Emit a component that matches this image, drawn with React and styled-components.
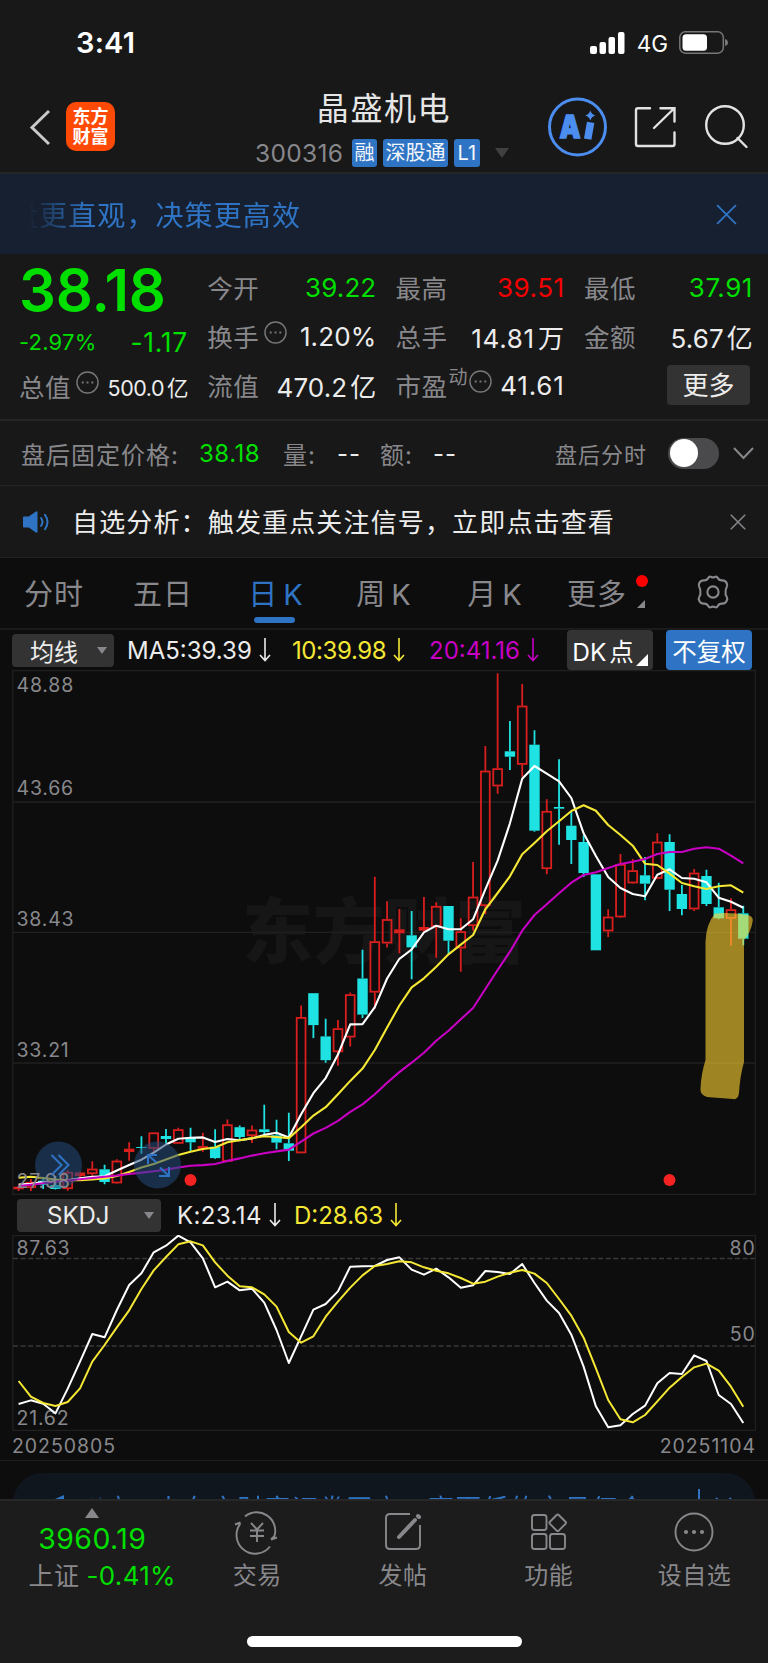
import React, { useState } from "react";
import styled, { createGlobalStyle } from "styled-components";

const blue = "#2f74c4";
const green = "#00df00";
const red = "#f50000";
const gray = "#88888c";
const white = "#ececec";

const GlobalStyle = createGlobalStyle`
  body {
    margin: 0;
    background: #0d0d0d;
    font-family: Inter, "Noto Sans CJK SC", sans-serif;
    color: ${white};
  }
  * {
    box-sizing: border-box;
  }
  svg {
    display: block;
    flex-shrink: 0;
  }
`;

// high, body top, body bottom, low, up (1) or down (0)
const candles = [
  [515.7, 516.7, 519.3, 521, 1],
  [509, 512, 518, 521, 1],
  [507, 510.7, 514.7, 519, 0],
  [506, 515, 519, 519.5, 0],
  [500, 502, 519, 520.7, 1],
  [501.5, 502.5, 506, 507.5, 1],
  [491.3, 498.7, 504, 505.7, 1],
  [494.7, 499.3, 512, 514.3, 0],
  [489.3, 490.7, 513.3, 513.7, 1],
  [472.3, 478.7, 482, 490.7, 1],
  [466.3, 477, 478, 483.7, 0],
  [462, 462.5, 478.7, 483, 1],
  [459, 466, 469, 474, 0],
  [457.7, 459.3, 473.7, 474, 1],
  [457.7, 468, 472.3, 481, 0],
  [462.8, 476.1, 479, 481.8, 1],
  [459.3, 476.8, 488.1, 488.8, 0],
  [449.5, 454.4, 491.6, 491.6, 1],
  [455.4, 457.2, 467, 469.8, 0],
  [455.4, 459.7, 466, 473, 1],
  [434.8, 459.3, 462.1, 466, 0],
  [449.8, 465.3, 472.6, 479.3, 0],
  [442.8, 473.3, 480.7, 490.9, 0],
  [335.5, 347.1, 483.2, 483.2, 1],
  [323.2, 323.2, 355.1, 368.1, 0],
  [348.8, 366.4, 390.2, 392.7, 0],
  [349.9, 358.3, 382.1, 395.8, 1],
  [322.5, 324.3, 367.4, 376.5, 1],
  [279.7, 308.5, 344.6, 348.1, 0],
  [206.8, 271.3, 322.5, 339, 1],
  [231.3, 249.2, 273.4, 277.6, 1],
  [239, 259.3, 263.3, 283.3, 1],
  [241, 265.3, 277.3, 309.3, 0],
  [227, 257, 260.7, 262.3, 1],
  [232.3, 236, 256.7, 287.7, 1],
  [236, 236, 270.7, 284.3, 0],
  [248.3, 261.3, 278.3, 301.7, 1],
  [192, 226.7, 256, 260.7, 1],
  [76, 100.7, 236, 244, 1],
  [3.3, 98.3, 116.3, 123.7, 1],
  [51, 81.3, 86.7, 100, 0],
  [14, 35.7, 94.7, 106.7, 1],
  [60.3, 74.7, 160.7, 161.7, 0],
  [129.3, 141, 199, 204.3, 1],
  [89.3, 137, 138.7, 174.7, 0],
  [141.7, 155.7, 170, 194, 0],
  [165.3, 172, 203, 207, 0],
  [204.3, 204.3, 280.3, 280.3, 0],
  [239.3, 246.7, 261.3, 267, 1],
  [184, 194, 247.3, 247.7, 1],
  [189, 200.3, 213.3, 213.7, 1],
  [187, 205.3, 213.7, 230.3, 0],
  [163.3, 171.7, 208.7, 209.3, 1],
  [164.3, 172, 219.7, 241, 0],
  [215, 224, 239, 245.3, 0],
  [199, 202.7, 239.3, 241, 1],
  [199.7, 206, 234, 236, 0],
  [212.7, 237.3, 248.3, 249.3, 0],
  [228.3, 239.3, 248.7, 275.7, 1],
  [235.7, 243.3, 268.7, 275.3, 0],
];

const ma5 = [
  514.5, 513.7, 512, 511.5, 510, 508.3, 506.8, 506.2, 500.5, 495, 489.7, 482.7,
  474.5, 468.8, 467.7, 467.4, 471.9, 469.1, 470.2, 468.4, 464.9, 462.8, 467.4,
  444.2, 423.2, 408.1, 384.6, 354.4, 354.1, 337.2, 308.5, 288.8, 279.5, 262.3,
  255.7, 259.3, 259.3, 249.3, 219.3, 190.7, 153.3, 108.7, 96, 103.7, 111.3, 128,
  163.3, 186, 207, 218, 224, 226.3, 204.7, 199.3, 208, 208.7, 212.3, 227.7,
  231.7, 237.7,
];
const ma10 = [
  507.7, 506.7, 508, 509.5, 510.2, 510.2, 509.5, 508.4, 506, 502.1, 497.5, 494,
  489.5, 484.9, 481.8, 479, 477.5, 472.3, 470.2, 468.1, 466.3, 467, 468.1,
  457.2, 445.6, 437.2, 424.2, 410.9, 398.6, 380, 357.6, 335.5, 317.3, 308.3,
  296.7, 284.3, 274.7, 265, 239.3, 223, 206.3, 184.3, 173, 161.3, 151.3, 141,
  135.3, 140.7, 155, 165, 175.7, 193.7, 195, 203.7, 213, 216.3, 219, 216.3,
  215.3, 222.7,
];
const ma20 = [
  516.1, 514.7, 513.3, 511.8, 510.5, 509.3, 508, 506.7, 505.5, 504, 502.6,
  501.2, 499.6, 497.5, 495.8, 495.1, 494, 490.9, 488.4, 485.6, 483.2, 481.4,
  479.6, 471.6, 463.5, 457.9, 450.9, 441.8, 434.4, 424.2, 412.7, 402.1, 392.7,
  382.7, 370.7, 360.7, 349.3, 338, 319, 300, 281.7, 260.7, 245, 234.3, 223.3,
  212.7, 205, 202.3, 198, 194, 191.7, 189, 184, 182, 182, 178.7, 177.3, 178.7,
  185.7, 193.3,
];
const kLine = [
  643, 632, 642, 671, 597, 516, 433, 443, 361, 286, 251, 188, 168, 138, 158,
  206, 293, 276, 302, 297, 339, 421, 520, 440, 360, 343, 305, 231, 230, 229,
  211, 203, 240, 255, 237, 263, 294, 287, 244, 247, 253, 223, 280, 333, 370,
  435, 531, 650, 713, 707, 673, 648, 581, 550, 553, 497, 514, 616, 643, 700,
].map((v) => (v - 136) / 3);
const dLine = [
  574, 621, 640, 649, 637, 596, 516, 466, 413, 362, 298, 242, 202, 164, 155,
  167, 218, 258, 290, 293, 314, 351, 427, 459, 440, 381, 336, 294, 257, 229,
  223, 215, 218, 233, 243, 251, 265, 282, 276, 261, 249, 241, 252, 280, 328,
  378, 444, 536, 631, 689, 698, 676, 635, 594, 562, 533, 522, 543, 591, 651,
].map((v) => (v - 136) / 3);

const xAt = (i) => 6.6 + i * 12.283;
const toPoints = (list) => list.map((y, i) => `${xAt(i)},${y}`).join(" ");

const Page = styled.div`
  width: 768px;
  height: 1663px;
  display: flex;
  flex-direction: column;
  overflow: hidden;
  background: #0d0d0d;
  white-space: nowrap;
  & > * {
    flex-shrink: 0;
  }
`;

const StatusBar = styled.div`
  height: 78px;
  padding: 7px 39px 0 76px;
  display: flex;
  align-items: center;
  background: #181818;
  color: #fff;
`;
const Clock = styled.span`
  font-size: 29px;
  font-weight: 600;
  letter-spacing: 0.2px;
  margin-right: auto;
`;
const Network = styled.span`
  font-size: 22.5px;
  margin: 2px 11px 0 12px;
  letter-spacing: 0;
`;

const Header = styled.header`
  height: 96px;
  display: flex;
  background: #181818;
  border-bottom: 2px solid #252525;
`;
const HeaderSide = styled.div`
  width: 240px;
  display: flex;
  align-items: flex-start;
  padding: 24px 0 0 29px;
`;
const Logo = styled.div`
  width: 49px;
  height: 49px;
  margin-left: 16px;
  padding-top: 5px;
  border-radius: 10px;
  background: #ff4a05;
  color: #fff;
  font-size: 18px;
  font-weight: 700;
  line-height: 19.5px;
  text-align: center;
`;
const HeaderCenter = styled.div`
  width: 288px;
  display: flex;
  flex-direction: column;
  align-items: center;
`;
const StockName = styled.div`
  font-size: 32px;
  line-height: 40px;
  letter-spacing: 1.6px;
  margin-top: 11px;
  color: #e6e6e6;
`;
const CodeRow = styled.div`
  display: flex;
  align-items: center;
  align-self: flex-start;
  margin: 10px 0 0 15px;
  gap: 6px;
`;
const Code = styled.span`
  font-size: 24.5px;
  line-height: 28px;
  width: 91px;
  color: ${gray};
  letter-spacing: 0.3px;
`;
const Tag = styled.span`
  height: 28px;
  padding: 0 ${(p) => p.$pad || 2.5}px;
  line-height: 28px;
  border-radius: 3px;
  background: ${blue};
  color: #f2f6fb;
  font-size: 20px;
`;
const Triangle = styled.i`
  width: 0;
  height: 0;
  margin-left: ${(p) => p.$gap || 0}px;
  border: ${(p) => p.$size}px solid transparent;
  border-${(p) => (p.$up ? "bottom" : "top")}: ${(p) => p.$size * 1.5}px solid ${(p) => p.$color};
  border-${(p) => (p.$up ? "top" : "bottom")}: 0;
`;

const Banner = styled.div`
  height: 80px;
  padding: 0 31px 0 27px;
  display: flex;
  align-items: center;
  justify-content: space-between;
  background: #172030;
  color: ${blue};
`;
const BannerText = styled.span`
  font-size: 28px;
  letter-spacing: 1.1px;
  margin-left: -17px;
  mask-image: linear-gradient(90deg, transparent 18px, #000 76px);
`;

const Quote = styled.section`
  height: 167px;
  display: grid;
  grid-template-columns: repeat(4, 169px);
  column-gap: 19.3px;
  padding: 9px 0 0 19px;
  background: #181818;
  border-bottom: 2px solid #252525;
`;
const QuoteRow = styled.div`
  height: 49px;
  display: flex;
  align-items: center;
  justify-content: space-between;
`;
const Price = styled.div`
  height: 57px;
  font-size: 58px;
  line-height: 55px;
  font-weight: 600;
  letter-spacing: -0.2px;
  color: ${green};
`;
const ChangeRow = styled(QuoteRow)`
  height: 44px;
`;
const Label = styled.span`
  display: flex;
  margin-bottom: 2px;
  font-size: ${(p) => p.$size || 25.5}px;
  letter-spacing: 0.5px;
  color: ${gray};
`;
const Small = styled.sup`
  font-size: 19px;
  line-height: 20px;
  margin: 2px -4px 0 1px;
`;
const Value = styled.span`
  font-size: ${(p) => p.$size || 26}px;
  letter-spacing: ${(p) => p.$track ?? 0.1}px;
  color: ${(p) => p.$color || white};
`;
const Unit = styled.span`
  margin-left: 3px;
`;
const MoreButton = styled.button`
  width: 83px;
  height: 40px;
  margin: 0 3px 2px auto;
  padding: 0 0 2px;
  border: 0;
  border-radius: 4px;
  background: #333;
  color: ${white};
  font: 26px Inter, "Noto Sans CJK SC", sans-serif;
`;

const AfterHours = styled.section`
  height: 65px;
  padding: 0 14px 0 21px;
  display: flex;
  align-items: center;
  background: #181818;
  border-bottom: 1px solid #252525;
`;
const Field = styled.span`
  width: ${(p) => p.$width}px;
  font-size: ${(p) => p.$size || 24}px;
  letter-spacing: ${(p) => p.$track ?? 1}px;
  color: ${(p) => p.$color || gray};
`;
const Switch = styled.button`
  width: 51px;
  height: 31px;
  margin: 0 14px 0 auto;
  padding: 1.5px;
  border: 0;
  border-radius: 16px;
  background: #4a4a4d;
  display: flex;
  justify-content: ${(p) => (p.$on ? "flex-end" : "flex-start")};
`;
const Knob = styled.span`
  width: 28px;
  height: 28px;
  border-radius: 50%;
  background: #fff;
`;

const Notice = styled.section`
  height: 72px;
  padding: 0 22px 0 23px;
  display: flex;
  align-items: center;
  background: #181818;
  border-bottom: 1px solid #222;
`;
const NoticeText = styled.span`
  flex: 1;
  margin: 0 0 2px 22px;
  font-size: 26px;
  letter-spacing: 1.15px;
`;

const Tabs = styled.nav`
  height: 72px;
  display: grid;
  grid-template-columns: 108px 110px 116px 100px 122px 102px 110px;
  border-bottom: 2px solid #1b1b1b;
`;
const Tab = styled.button`
  position: relative;
  padding: 0 ${(p) => p.$pad || 0}px 2px 0;
  border: 0;
  background: none;
  color: ${(p) => (p.$active ? blue : gray)};
  font: 29px Inter, "Noto Sans CJK SC", sans-serif;
  letter-spacing: 1px;
  word-spacing: -4px;
  display: flex;
  align-items: center;
  justify-content: center;
  &::after {
    content: "";
    display: ${(p) => (p.$active ? "block" : "none")};
    position: absolute;
    bottom: 5px;
    left: 36px;
    width: 41px;
    height: 6px;
    border-radius: 3px;
    background: ${blue};
  }
`;
const RedDot = styled.i`
  position: absolute;
  top: 17px;
  right: 10px;
  width: 12px;
  height: 12px;
  border-radius: 50%;
  background: #ff0000;
`;
const Corner = styled.i`
  position: absolute;
  right: ${(p) => p.$right}px;
  bottom: ${(p) => p.$bottom}px;
  border-left: ${(p) => p.$size}px solid transparent;
  border-bottom: ${(p) => p.$size}px solid ${(p) => p.$color};
`;

const Indicators = styled.div`
  height: 40px;
  padding-left: ${(p) => p.$left}px;
  display: flex;
  align-items: center;
`;
const Select = styled.button`
  width: ${(p) => p.$width}px;
  height: 33px;
  padding: 0 7px 0 ${(p) => p.$left}px;
  margin-right: ${(p) => p.$gap}px;
  border: 0;
  border-radius: 4px;
  background: #333;
  color: ${white};
  font: 24px Inter, "Noto Sans CJK SC", sans-serif;
  display: flex;
  align-items: center;
  justify-content: space-between;
`;
const Reading = styled.span`
  width: ${(p) => p.$width}px;
  display: flex;
  align-items: center;
  gap: 7px;
  font-size: 24px;
  letter-spacing: ${(p) => p.$track ?? 0}px;
  color: ${(p) => p.$color};
`;
const ChartButton = styled.button`
  position: relative;
  width: 86px;
  height: 40px;
  margin-right: 13px;
  padding: 0 ${(p) => (p.$primary ? 0 : 14)}px 0 0;
  border: 0;
  border-radius: 4px;
  background: ${(p) => (p.$primary ? blue : "#333")};
  color: #fff;
  font: 24.5px Inter, "Noto Sans CJK SC", sans-serif;
  word-spacing: -4px;
`;
const ChartWrap = styled.div`
  padding-left: 12px;
`;
const AxisText = styled.text`
  font-size: 19.5px;
  letter-spacing: 0.8px;
  fill: ${gray};
`;
const Watermark = styled.text`
  font-size: 71px;
  font-weight: 900;
  fill: #161616;
`;
const Dates = styled.div`
  height: 30px;
  padding: 0 12px;
  display: flex;
  align-items: center;
  justify-content: space-between;
  font-size: 19.5px;
  letter-spacing: 0.95px;
  color: ${gray};
  border-bottom: 1px solid #202020;
`;

const PromoArea = styled.div`
  height: 38px;
  padding: 12px 13px 0;
  overflow: hidden;
`;
const Promo = styled.div`
  height: 64px;
  padding: 0 22px 0 33px;
  border-radius: 30px;
  background: #10161e;
  color: ${blue};
  display: flex;
  align-items: center;
`;
const PromoText = styled.span`
  flex: 1;
  margin: 3px 0 0 12px;
  font-size: 26px;
  letter-spacing: 1.25px;
  mask-image: linear-gradient(90deg, transparent 12px, #000 42px);
`;

const Footer = styled.footer`
  height: 164px;
  display: grid;
  grid-template-columns: 184.5px repeat(4, 145.7px);
  grid-template-rows: 114px 1fr;
  background: #1c1c1c;
  border-top: 2px solid #272727;
`;
const IndexBox = styled.div`
  display: flex;
  flex-direction: column;
  align-items: center;
  padding-top: 7px;
`;
const IndexValue = styled.span`
  font-size: 28.5px;
  line-height: 34px;
  margin-top: 4px;
  letter-spacing: 0.4px;
  color: ${green};
`;
const IndexRow = styled.span`
  display: flex;
  align-items: center;
  gap: 7px;
  height: 30px;
  margin: 4px 0 0 20px;
`;
const NavItem = styled.div`
  display: flex;
  flex-direction: column;
  align-items: center;
  padding-top: 10px;
  font-size: 24px;
  line-height: 36px;
  letter-spacing: 0.5px;
  color: ${gray};
  svg {
    margin-bottom: 5px;
  }
`;
const HomeBar = styled.div`
  grid-column: 1 / -1;
  width: 275px;
  height: 11px;
  margin: 21px 0 0 247px;
  border-radius: 6px;
  background: #fff;
`;

const Cross = ({ size, color, width = 1.6 }) => (
  <svg width={size} height={size} viewBox="0 0 20 20" stroke={color} strokeWidth={(width * 20) / size}>
    <path d="M1 1L19 19M19 1L1 19" />
  </svg>
);

const DownArrow = () => (
  <svg width="12" height="24" viewBox="0 0 12 24" fill="none" stroke="currentColor" strokeWidth="1.6">
    <path d="M6 0V22M1 17L6 22.5L11 17" />
  </svg>
);

const InfoIcon = styled.svg`
  margin: 4px 0 0 5px;
`;
const InfoDots = () => (
  <InfoIcon width="23" height="23" viewBox="0 0 24 24" fill="none" stroke="#77777b" strokeWidth="1.5">
    <circle cx="12" cy="12" r="11" />
    <path d="M6 12h2M11 12h2M16 12h2" strokeWidth="2" />
  </InfoIcon>
);

const StatusIcons = () => (
  <>
    <svg width="35" height="22" viewBox="0 0 35 22" fill="#fff">
      <rect x="0" y="14" width="7" height="8" rx="2" />
      <rect x="9.5" y="10" width="6.5" height="12" rx="2" />
      <rect x="18.5" y="5" width="6.5" height="17" rx="2" />
      <rect x="28" y="0" width="6.5" height="22" rx="2" />
    </svg>
    <Network>4G</Network>
    <svg width="50" height="23" viewBox="0 0 50 23">
      <rect x="0.8" y="0.8" width="43.5" height="21.4" rx="5.5" fill="none" stroke="#77777a" strokeWidth="1.5" />
      <rect x="3.5" y="3.3" width="24.5" height="16.4" rx="3.5" fill="#fff" />
      <path d="M46 8q3 1 3 3.5t-3 3.5z" fill="#77777a" />
    </svg>
  </>
);

const HeaderIcons = () => (
  <svg width="240" height="90" viewBox="528 78 240 90" fill="none" stroke="#e2e2e2" strokeWidth="2.4" strokeLinecap="round">
    <circle cx="577.5" cy="127" r="28" stroke="#4c8df0" strokeWidth="3" />
    <text
      x="559.5"
      y="137.5"
      fill="#4c8df0"
      stroke="#4c8df0"
      strokeWidth="1.4"
      fontSize="32"
      fontWeight="900"
      fontFamily="Inter, sans-serif"
      textLength="21"
      lengthAdjust="spacingAndGlyphs"
    >
      A
    </text>
    <path d="M590 126L588.3 135.5" stroke="#4c8df0" strokeWidth="7.5" strokeLinecap="square" />
    <path d="M590.3 110.5q1.2 4 5 5q-3.8 1 -5 5q-1.2 -4 -5 -5q3.8 -1 5 -5z" fill="#4c8df0" stroke="none" />
    <path d="M650 108.3H638q-2 0 -2 2V144q0 2 2 2H672.5q2 0 2 -2V132.5M660.5 108.3H674.5V121.5M673 109.5L654 128" />
    <circle cx="725" cy="125" r="18.8" />
    <path d="M737.5 138L746.5 147" />
  </svg>
);

const Speaker = () => (
  <svg width="27" height="22" viewBox="0 0 27 22" fill="none" stroke={blue} strokeWidth="2" strokeLinecap="round">
    <path d="M1 6.5H6L13.5 1.2V20.8L6 15.5H1z" fill={blue} strokeLinejoin="round" />
    <path d="M18 7q3 4 0 8" />
    <path d="M22 3.8q5 7 0 14.4" />
  </svg>
);

const Gear = () => (
  <svg width="36" height="36" viewBox="0 0 34 34" fill="none" stroke={gray} strokeWidth="2" strokeLinejoin="round">
    <path d="M12.5 3.8Q13.5 2 15.5 2.8Q17 3.6 18.5 2.8Q20.5 2 21.5 3.8Q22.7 6.2 25.7 6Q29 6 30 8.8Q31 10.8 29.8 12.8Q28.4 14.6 29 17Q28.4 19.4 29.8 21.2Q31 23.2 30 25.2Q29 28 25.7 28Q22.7 27.8 21.5 30.2Q20.5 32 18.5 31.2Q17 30.4 15.5 31.2Q13.5 32 12.5 30.2Q11.3 27.8 8.3 28Q5 28 4 25.2Q3 23.2 4.2 21.2Q5.6 19.4 5 17Q5.6 14.6 4.2 12.8Q3 10.8 4 8.8Q5 6 8.3 6Q11.3 6.2 12.5 3.8z" />
    <circle cx="17" cy="17" r="5.3" />
  </svg>
);

const Candle = ({ i, data }) => {
  const [high, top, bottom, low, up] = data;
  const x = xAt(i);
  const color = up ? "#d91e1e" : "#1fe3e3";
  const h = bottom - top;
  return (
    <g stroke={color} strokeWidth="1.8">
      <path d={`M${x} ${high}V${top}M${x} ${bottom}V${low}`} />
      {up && h > 4.5 ? (
        <rect x={x - 4.4} y={top + 0.8} width="8.8" height={h - 1.6} fill="none" />
      ) : (
        <rect x={x - 5.2} y={top} width="10.4" height={h} fill={color} stroke="none" />
      )}
    </g>
  );
};

const KChart = () => (
  <svg width="744" height="525" viewBox="0 0 744 525" fill="none">
    <Watermark x="230" y="287">
      东方财富
    </Watermark>
    <path d="M0.8 0.5H743.5V524.5H0.8zM1 132H743M1 262.3H743M1 393H743" stroke="#202020" strokeWidth="1.3" />
    {candles.map((c, i) => (
      <Candle key={i} i={i} data={c} />
    ))}
    <g strokeWidth="2.1" strokeLinejoin="round">
      <polyline points={toPoints(ma5)} stroke="#fff" />
      <polyline points={toPoints(ma10)} stroke="#f5e835" />
      <polyline points={toPoints(ma20)} stroke="#c800c3" />
    </g>
    <g fill="#254b7c" fillOpacity="0.55">
      <circle cx="46.5" cy="495" r="23.5" />
      <circle cx="145.5" cy="495" r="23.5" />
    </g>
    <AxisText x="4.5" y="22">48.88</AxisText>
    <AxisText x="4.5" y="124.5">43.66</AxisText>
    <AxisText x="4.5" y="255.5">38.43</AxisText>
    <AxisText x="4.5" y="386.5">33.21</AxisText>
    <AxisText x="4.5" y="517.5">27.98</AxisText>
    <g stroke={blue} strokeWidth="2">
      <path d="M39.5 485L49.5 495L39.5 505M46.5 485L56.5 495L46.5 505" />
      <path d="M136 494V485H145M136.5 485.5L144.5 492.5M148 497.5L156.5 505.5M157 497V506H147" />
    </g>
    <circle cx="178.5" cy="510" r="6" fill="#f52222" />
    <circle cx="657.5" cy="510" r="6" fill="#f52222" />
    <path
      d="M703 243.5Q718 242 735 245Q742 246 740.5 252Q739 262 732 270V392Q728 406 727 423Q726 430 721 429L695 427Q688 425 688.5 419Q689 404 693.5 390V272Q694 254 703 243.5z"
      fill="#ffd332"
      fillOpacity="0.6"
    />
  </svg>
);

const SkdjChart = () => (
  <svg width="744" height="196" viewBox="0 0 744 196" fill="none">
    <path d="M0.8 0.5H743.5V195.3H0.8z" stroke="#202020" strokeWidth="1.3" />
    <path d="M1 23.5H743M1 111H743" stroke="#39393c" strokeWidth="1.6" strokeDasharray="5 2.6" />
    <AxisText x="4.5" y="20">87.63</AxisText>
    <AxisText x="4.5" y="190">21.62</AxisText>
    <AxisText x="743.5" y="20" textAnchor="end">80</AxisText>
    <AxisText x="743.5" y="106" textAnchor="end">50</AxisText>
    <g strokeWidth="2" strokeLinejoin="round">
      <polyline points={toPoints(kLine)} stroke="#fff" />
      <polyline points={toPoints(dLine)} stroke="#f5e835" />
    </g>
  </svg>
);

const icons = {
  trade: (
    <>
      <path d="M9 5.5A18.5 18.5 0 0 1 38.5 25L35 28.5M35 28.5L41 26.5M34 35.5A18.5 18.5 0 0 1 4.5 12.5M-1 13.5L4.5 11.5" />
      <path d="M15 12L21 18.5L27 12M21 18.5V31M14 19.5H28M14 25H28" />
    </>
  ),
  post: (
    <>
      <path d="M28 3H8Q4 3 4 7V34Q4 38 8 38H34Q38 38 38 34V14" />
      <path d="M36 5L37 6M33 9L17 26" strokeWidth="4" strokeLinecap="round" />
    </>
  ),
  apps: (
    <>
      <rect x="4" y="4" width="14.5" height="15" rx="2.5" />
      <rect x="4" y="23" width="14.5" height="15" rx="2.5" />
      <rect x="22" y="23" width="15" height="15" rx="2.5" />
      <rect x="23.5" y="5.5" width="12.5" height="12.5" rx="1.5" transform="rotate(45 29.7 11.7)" />
    </>
  ),
  favorite: (
    <>
      <circle cx="21" cy="21" r="18.5" />
      <g fill={gray} stroke="none">
        <circle cx="13" cy="21" r="2.1" />
        <circle cx="21" cy="21" r="2.1" />
        <circle cx="29" cy="21" r="2.1" />
      </g>
    </>
  ),
};

const navItems = [
  ["trade", "交易"],
  ["post", "发帖"],
  ["apps", "功能"],
  ["favorite", "设自选"],
];

const App = () => {
  const [tab, setTab] = useState("日 K");
  const [afterHours, setAfterHours] = useState(false);

  return (
    <Page>
      <GlobalStyle />
      <StatusBar>
        <Clock>3:41</Clock>
        <StatusIcons />
      </StatusBar>
      <Header>
        <HeaderSide>
          <svg width="21" height="50" viewBox="0 0 21 50" fill="none" stroke="#c9c9c9" strokeWidth="3">
            <path d="M20 9L3 25.5L20 42" />
          </svg>
          <Logo>
            东方
            <br />
            财富
          </Logo>
        </HeaderSide>
        <HeaderCenter>
          <StockName>晶盛机电</StockName>
          <CodeRow>
            <Code>300316</Code>
            <Tag>融</Tag>
            <Tag>深股通</Tag>
            <Tag $pad={3.5}>L1</Tag>
            <Triangle $size={7} $gap={9} $color="#404040" />
          </CodeRow>
        </HeaderCenter>
        <HeaderIcons />
      </Header>
      <Banner>
        <BannerText>盘更直观，决策更高效</BannerText>
        <Cross size={21} color={blue} width={1.8} />
      </Banner>

      <Quote>
        <div>
          <Price>38.18</Price>
          <ChangeRow>
            <Value $size={22} $track={0.2} $color={green}>-2.97%</Value>
            <Value $size={26.5} $track={0.7} $color={green}>-1.17</Value>
          </ChangeRow>
          <ChangeRow>
            <Label>总值<InfoDots /></Label>
            <Value $size={21.5} $track={-0.5}>500.0<Unit>亿</Unit></Value>
          </ChangeRow>
        </div>
        <div>
          <QuoteRow>
            <Label>今开</Label>
            <Value $color={green}>39.22</Value>
          </QuoteRow>
          <QuoteRow>
            <Label>换手<InfoDots /></Label>
            <Value>1.20%</Value>
          </QuoteRow>
          <QuoteRow>
            <Label>流值</Label>
            <Value>470.2<Unit>亿</Unit></Value>
          </QuoteRow>
        </div>
        <div>
          <QuoteRow>
            <Label>最高</Label>
            <Value $track={0.5} $color={red}>39.51</Value>
          </QuoteRow>
          <QuoteRow>
            <Label>总手</Label>
            <Value $track={0.7}>14.81<Unit>万</Unit></Value>
          </QuoteRow>
          <QuoteRow>
            <Label>市盈<Small>动</Small><InfoDots /></Label>
            <Value $track={0.8}>41.61</Value>
          </QuoteRow>
        </div>
        <div>
          <QuoteRow>
            <Label>最低</Label>
            <Value $track={0.5} $color={green}>37.91</Value>
          </QuoteRow>
          <QuoteRow>
            <Label>金额</Label>
            <Value>5.67<Unit>亿</Unit></Value>
          </QuoteRow>
          <QuoteRow>
            <MoreButton>更多</MoreButton>
          </QuoteRow>
        </div>
      </Quote>

      <AfterHours>
        <Field $width={178}>盘后固定价格:</Field>
        <Field $width={84} $track={0.5} $color={green}>38.18</Field>
        <Field $width={54}>量:</Field>
        <Field $width={43} $color={white}>--</Field>
        <Field $width={53}>额:</Field>
        <Field $width={122} $color={white}>--</Field>
        <Field $width={100} $size={22}>盘后分时</Field>
        <Switch $on={afterHours} onClick={() => setAfterHours(!afterHours)}>
          <Knob />
        </Switch>
        <svg width="21" height="13" viewBox="0 0 21 13" fill="none" stroke={gray} strokeWidth="2">
          <path d="M1 1L10.5 11L20 1" />
        </svg>
      </AfterHours>

      <Notice>
        <Speaker />
        <NoticeText>自选分析：触发重点关注信号，立即点击查看</NoticeText>
        <Cross size={16} color={gray} width={1.5} />
      </Notice>

      <Tabs>
        {["分时", "五日", "日 K", "周 K", "月 K"].map((name) => (
          <Tab key={name} $active={tab === name} onClick={() => setTab(name)}>
            {name}
          </Tab>
        ))}
        <Tab $pad={20}>
          更多
          <RedDot />
          <Corner $right={13} $bottom={20} $size={8} $color={gray} />
        </Tab>
        <Tab>
          <Gear />
        </Tab>
      </Tabs>

      <Indicators $left={12}>
        <Select $width={102} $left={18} $gap={13}>
          均线
          <Triangle $size={5} $color={gray} />
        </Select>
        <Reading $width={165} $color={white}>MA5:39.39<DownArrow /></Reading>
        <Reading $width={137} $track={-0.4} $color="#f5e835">10:39.98<DownArrow /></Reading>
        <Reading $width={138} $color="#c800c3">20:41.16<DownArrow /></Reading>
        <ChartButton>
          DK 点
          <Corner $right={5} $bottom={4} $size={12} $color="#fff" />
        </ChartButton>
        <ChartButton $primary>不复权</ChartButton>
      </Indicators>
      <ChartWrap>
        <KChart />
      </ChartWrap>
      <Indicators $left={17}>
        <Select $width={144} $left={30} $gap={16}>
          SKDJ
          <Triangle $size={5} $color={gray} />
        </Select>
        <Reading $width={117} $track={0.4} $color={white}>K:23.14<DownArrow /></Reading>
        <Reading $width={115} $color="#f5e835">D:28.63<DownArrow /></Reading>
      </Indicators>
      <ChartWrap>
        <SkdjChart />
      </ChartWrap>
      <Dates>
        <span>20250805</span>
        <span>20251104</span>
      </Dates>

      <PromoArea>
        <Promo>
          <svg width="20" height="24" viewBox="0 0 20 24" fill={blue}>
            <path d="M0 10L18 2V22L0 16z" />
          </svg>
          <PromoText>账户? 来东方财富证券开户，享更低的交易佣金</PromoText>
          <svg width="35" height="32" viewBox="0 0 35 32" stroke={blue} strokeWidth="2">
            <path d="M1 0V32M18 9L33 24M33 9L18 24" />
          </svg>
        </Promo>
      </PromoArea>
      <Footer>
        <IndexBox>
          <Triangle $up $size={7} $color={gray} />
          <IndexValue>3960.19</IndexValue>
          <IndexRow>
            <Label $size={25}>上证</Label>
            <Value $color={green} $size={26} $track={0.3}>-0.41%</Value>
          </IndexRow>
        </IndexBox>
        {navItems.map(([icon, text]) => (
          <NavItem key={icon}>
            <svg width="42" height="42" viewBox="0 0 42 42" overflow="visible" fill="none" stroke={gray} strokeWidth="1.9">
              {icons[icon]}
            </svg>
            {text}
          </NavItem>
        ))}
        <HomeBar />
      </Footer>
    </Page>
  );
};

export default App;
